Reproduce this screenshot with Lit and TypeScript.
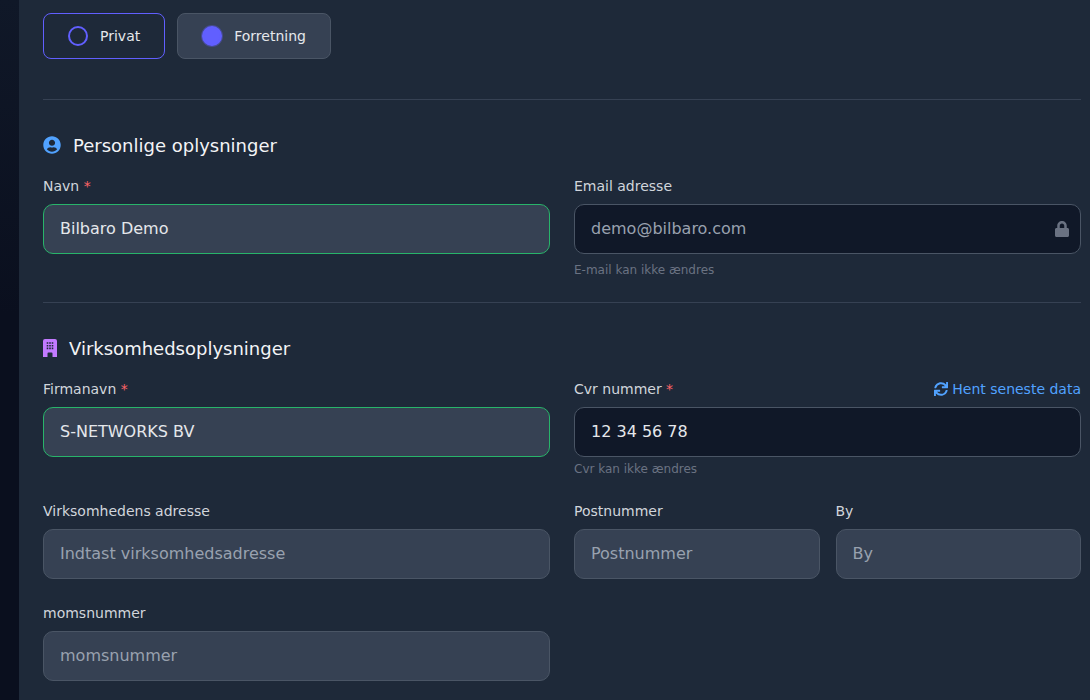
import { LitElement, html, css, svg } from 'lit';
import { customElement } from 'lit/decorators.js';
import { classMap } from 'lit/directives/class-map.js';

const userIcon = svg`<path d="M248 8C111 8 0 119 0 256s111 248 248 248 248-111 248-248S385 8 248 8zm0 96c48.6 0 88 39.4 88 88s-39.4 88-88 88-88-39.4-88-88 39.4-88 88-88zm0 344c-58.7 0-111.3-26.6-146.5-68.2 18.8-35.4 55.6-59.8 98.5-59.8 2.4 0 4.8.4 7.1 1.1 13 4.2 26.6 6.9 40.9 6.9 14.3 0 28-2.7 40.9-6.9 2.3-.7 4.7-1.1 7.1-1.1 42.9 0 79.7 24.4 98.5 59.8C359.3 421.4 306.7 448 248 448z"/>`;
const lockIcon = svg`<path d="M400 224h-24v-72C376 68.2 307.8 0 224 0S72 68.2 72 152v72H48c-26.5 0-48 21.5-48 48v192c0 26.5 21.5 48 48 48h352c26.5 0 48-21.5 48-48V272c0-26.5-21.5-48-48-48zm-104 0H152v-72c0-39.7 32.3-72 72-72s72 32.3 72 72v72z"/>`;
const syncIcon = svg`<path d="M440.65 12.57l4 82.77A247.16 247.16 0 0 0 255.83 8C134.73 8 33.91 94.92 12.29 209.82A12 12 0 0 0 24.09 224h49.05a12 12 0 0 0 11.67-9.26 175.91 175.91 0 0 1 317-56.94l-101.46-4.86a12 12 0 0 0-12.57 12v47.41a12 12 0 0 0 12 12H500a12 12 0 0 0 12-12V12a12 12 0 0 0-12-12h-47.37a12 12 0 0 0-11.98 12.57zM255.83 432a175.61 175.61 0 0 1-146-77.8l101.8 4.87a12 12 0 0 0 12.57-12v-47.4a12 12 0 0 0-12-12H12a12 12 0 0 0-12 12V500a12 12 0 0 0 12 12h47.35a12 12 0 0 0 12-12.6l-4.15-82.57A247.17 247.17 0 0 0 255.83 504c121.11 0 221.93-86.92 243.55-201.82a12 12 0 0 0-11.8-14.18h-49.05a12 12 0 0 0-11.67 9.26A175.86 175.86 0 0 1 255.83 432z"/>`;
const buildingIcon = svg`<path fill-rule="evenodd" d="M2 0h10a2 2 0 0 1 2 2v16H9.5v-3.5a1 1 0 0 0-1-1h-3a1 1 0 0 0-1 1V18H0V2a2 2 0 0 1 2-2zM3.7 3.2v1.6h1.6V3.2zm2.5 0v1.6h1.6V3.2zm2.5 0v1.6h1.6V3.2zM3.7 5.9v1.6h1.6V5.9zm2.5 0v1.6h1.6V5.9zm2.5 0v1.6h1.6V5.9zM3.7 8.6v1.6h1.6V8.6zm2.5 0v1.6h1.6V8.6zm2.5 0v1.6h1.6V8.6z"/>`;

@customElement('app-root')
export class AppRoot extends LitElement {
  static styles = css`
    :host {
      display: flex;
      height: 700px;
      overflow: hidden;
      background: #1e2939;
      font-family: 'DejaVu Sans', sans-serif;
      color: #f3f4f6;
    }

    .rail {
      width: 19px;
      flex: none;
      background: linear-gradient(180deg, #101828 0, #0a0f1e 45%, #0a0f1e 100%);
    }

    main {
      flex: 1;
      min-width: 0;
      padding: 13px 9px 0 24px;
    }

    .types {
      display: flex;
      gap: 12px;
    }

    .type {
      display: flex;
      align-items: center;
      gap: 12px;
      height: 46px;
      box-sizing: border-box;
      padding: 0 24px;
      border: 1px solid #4a5565;
      border-radius: 8px;
      background: #364153;
      font-size: 14px;
      color: #e5e7eb;
    }

    .type.outlined {
      background: transparent;
      border-color: #615fff;
    }

    .dot {
      width: 20px;
      height: 20px;
      box-sizing: border-box;
      border-radius: 50%;
      border: 2px solid #615fff;
    }

    .dot.on {
      background: #615fff;
      box-shadow: 0 0 0 1px rgba(97, 95, 255, 0.35);
    }

    hr {
      margin: 0;
      border: 0;
      border-top: 1px solid #364153;
    }

    .types + hr {
      margin-top: 40px;
    }

    h2 {
      display: flex;
      align-items: center;
      gap: 12px;
      margin: 32px 0 0;
      height: 26px;
      font-size: 18px;
      font-weight: 400;
      color: #f3f4f6;
    }

    h2 svg {
      fill: currentColor;
      flex: none;
    }

    .blue {
      color: #51a2ff;
    }

    .purple {
      color: #c27aff;
    }

    .grid {
      display: grid;
      grid-template-columns: 1fr 1fr;
      column-gap: 24px;
      margin-top: 18px;
    }

    .split {
      display: grid;
      grid-template-columns: 1fr 1fr;
      column-gap: 16px;
    }

    .head {
      display: flex;
      align-items: center;
      justify-content: space-between;
      height: 20px;
      margin-bottom: 8px;
    }

    label {
      font-size: 14px;
      color: #d1d5dc;
    }

    .req {
      color: #ff6467;
    }

    .link {
      display: flex;
      align-items: center;
      gap: 4px;
      font-size: 14px;
      color: #51a2ff;
    }

    .link svg {
      fill: currentColor;
    }

    .box {
      position: relative;
    }

    input {
      display: block;
      width: 100%;
      height: 50px;
      box-sizing: border-box;
      padding: 0 16px 2px;
      border: 1px solid #4a5565;
      border-radius: 10px;
      outline: none;
      background: #364153;
      font: 16px 'DejaVu Sans', sans-serif;
      color: #e5e7eb;
    }

    input::placeholder {
      color: #99a1af;
    }

    input.valid {
      border-color: #28b46a;
    }

    input.locked {
      background: #101828;
    }

    input.muted {
      color: #99a1af;
    }

    .lock {
      position: absolute;
      right: 12px;
      top: 17px;
      fill: #6a7282;
    }

    .hint {
      margin-top: 9px;
      height: 14px;
      line-height: 14px;
      font-size: 12px;
      color: #6a7282;
    }

    .hint.close {
      margin-top: 5px;
    }

    .gap-a {
      margin-top: 25px;
    }

    .gap-c {
      margin-top: 25px;
    }

    .gap-d {
      margin-top: 24px;
    }
  `;

  private field(name: string, required: boolean, value: string, placeholder: string, cls: Record<string, boolean> = {}) {
    return html`
      <div class="head">
        <label>${name}${required ? html` <span class="req">*</span>` : ''}</label>
      </div>
      <div class="box"><input class=${classMap(cls)} .value=${value} placeholder=${placeholder} /></div>
    `;
  }

  render() {
    return html`
      <div class="rail"></div>
      <main>
        <div class="types">
          <div class="type outlined"><span class="dot"></span>Privat</div>
          <div class="type"><span class="dot on"></span>Forretning</div>
        </div>
        <hr />

        <h2>
          <svg class="blue" width="18" height="18" viewBox="0 0 496 512">${userIcon}</svg>
          Personlige oplysninger
        </h2>
        <div class="grid">
          <div>${this.field('Navn', true, 'Bilbaro Demo', '', { valid: true })}</div>
          <div>
            <div class="head"><label>Email adresse</label></div>
            <div class="box">
              <input class="locked muted" .value=${'demo@bilbaro.com'} />
              <svg class="lock" width="14" height="16" viewBox="0 0 448 512">${lockIcon}</svg>
            </div>
            <div class="hint">E-mail kan ikke ændres</div>
          </div>
        </div>
        <hr class="gap-a" />

        <h2>
          <svg class="purple" width="14" height="18" viewBox="0 0 14 18">${buildingIcon}</svg>
          Virksomhedsoplysninger
        </h2>
        <div class="grid">
          <div>${this.field('Firmanavn', true, 'S-NETWORKS BV', '', { valid: true })}</div>
          <div>
            <div class="head">
              <label>Cvr nummer <span class="req">*</span></label>
              <span class="link">
                <svg width="14" height="14" viewBox="0 0 512 512">${syncIcon}</svg>
                Hent seneste data
              </span>
            </div>
            <div class="box"><input class="locked" .value=${'12 34 56 78'} /></div>
            <div class="hint close">Cvr kan ikke ændres</div>
          </div>
        </div>

        <div class="grid gap-c">
          <div>${this.field('Virksomhedens adresse', false, '', 'Indtast virksomhedsadresse')}</div>
          <div class="split">
            <div>${this.field('Postnummer', false, '', 'Postnummer')}</div>
            <div>${this.field('By', false, '', 'By')}</div>
          </div>
        </div>

        <div class="grid gap-d">
          <div>${this.field('momsnummer', false, '', 'momsnummer')}</div>
        </div>
      </main>
    `;
  }
}
